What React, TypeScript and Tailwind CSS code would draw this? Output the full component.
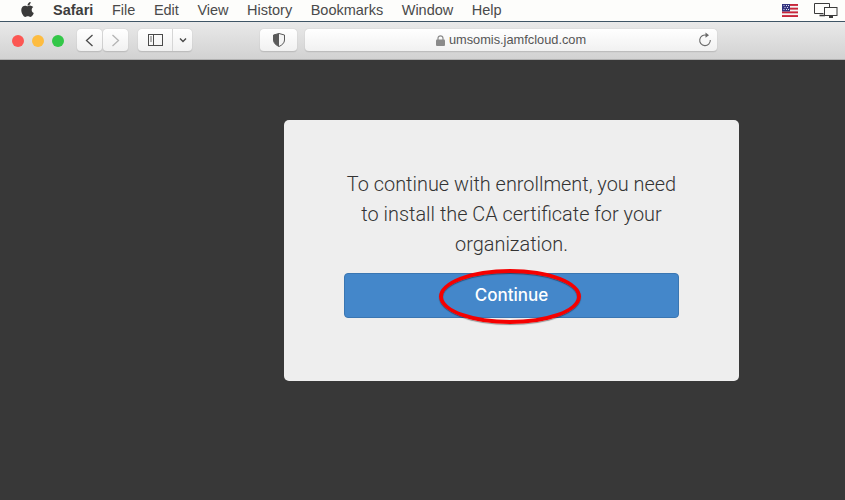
import React from 'react';
import { FaApple } from 'react-icons/fa';

const menuItems = ['File', 'Edit', 'View', 'History', 'Bookmarks', 'Window', 'Help'];

const toolButton = 'flex items-center justify-center h-[23px] rounded-[4px] border-b border-b-[#bdbdbd] bg-gradient-to-b from-[#ffffff] to-[#f1f1f1] shadow-[0_0_1px_rgba(0,0,0,0.25)]';

const UsFlag = () => (
  <svg width="16" height="13" viewBox="0 0 16 13" className="block">
    <rect width="16" height="13" fill="#f4f4f4" />
    <rect y="0" width="16" height="1.9" fill="#c8263a" />
    <rect y="3.7" width="16" height="1.9" fill="#c8263a" />
    <rect y="7.4" width="16" height="1.9" fill="#c8263a" />
    <rect y="11.1" width="16" height="1.9" fill="#c8263a" />
    <rect width="8" height="7.4" fill="#34347e" />
    <path d="M1.5 1.5h1M4 1.5h1M6 1.5h1M2.5 3.5h1M5 3.5h1M1.5 5.5h1M4 5.5h1M6 5.5h1" stroke="#dcdcf0" strokeWidth="1" />
  </svg>
);

const Displays = () => (
  <svg width="24" height="15" viewBox="0 0 24 15" fill="none" className="block">
    <path d="M9.5 10.5H.5V.5h15V4" stroke="#3a3a3a" />
    <path d="M5.5 12.5h5.5" stroke="#3a3a3a" strokeWidth="1.6" />
    <rect x="10.5" y="4.5" width="12.5" height="8" fill="#fdfdfb" stroke="#3a3a3a" />
    <path d="M15 14h4" stroke="#3a3a3a" strokeWidth="2" />
  </svg>
);

export default function App() {
  return (
    <div className="w-[845px] h-[500px] overflow-hidden flex flex-col bg-[#383838] font-['Inter',sans-serif]">
      <div className="h-[21px] bg-[#fdfdfb] flex items-center pl-[19px] pr-[7px] text-[14.5px] text-[#4a4a4a] font-['Liberation_Sans',sans-serif]">
        <FaApple className="text-[17px] text-[#3a3a3a] mb-[2px]" />
        <span className="ml-[17px] font-bold w-[41px] text-[#3d3d3d]">Safari</span>
        <div className="ml-[18px] flex gap-[18.5px]">
          {menuItems.map((item) => (
            <span key={item}>{item}</span>
          ))}
        </div>
        <div className="ml-auto flex items-center gap-[16px]">
          <UsFlag />
          <Displays />
        </div>
      </div>
      <div className="h-[1px] bg-[#3f5566]" />

      <div className="h-[38px] flex items-center pl-[12px] bg-gradient-to-b from-[#e9e9e9] to-[#d2d2d2] border-b border-b-[#b1b1b1]">
        <div className="flex gap-[8px]">
          <span className="w-[12px] h-[12px] rounded-full bg-[#fc5753]" />
          <span className="w-[12px] h-[12px] rounded-full bg-[#fdbc40]" />
          <span className="w-[12px] h-[12px] rounded-full bg-[#33c748]" />
        </div>
        <div className="ml-[13px] flex gap-[1px]">
          <div className={`${toolButton} w-[25px]`}>
            <svg width="9" height="13" viewBox="0 0 9 13" fill="none"><path d="M7.5 1 1.500 6.500l6 5.500" stroke="#4a4a4a" strokeWidth="1.3" /></svg>
          </div>
          <div className={`${toolButton} w-[25px]`}>
            <svg width="9" height="13" viewBox="0 0 9 13" fill="none"><path d="M1.500 1l6 5.500-6 5.500" stroke="#b4b4b4" strokeWidth="1.3" /></svg>
          </div>
        </div>
        <div className={`${toolButton} ml-[10px] w-[54px]`}>
          <div className="w-[35px] h-full flex items-center justify-center border-r border-r-[#d6d6d6]">
            <svg width="15" height="12" viewBox="0 0 15 12" fill="none">
              <rect x=".5" y=".5" width="14" height="11" stroke="#4a4a4a" />
              <path d="M5.500 0v12" stroke="#4a4a4a" />
              <path d="M2 3h2M2 5h2M2 7h2" stroke="#6a6a6a" />
            </svg>
          </div>
          <div className="flex-1 flex items-center justify-center">
            <svg width="8" height="6" viewBox="0 0 8 6" fill="none"><path d="M1 1.500 4 4.500l3-3" stroke="#4a4a4a" strokeWidth="1.4" /></svg>
          </div>
        </div>
        <div className={`${toolButton} ml-[68px] w-[37px]`}>
          <svg width="12" height="14" viewBox="0 0 12 14">
            <path d="M6 .5 11.500 2v5c0 3-2.500 5.200-5.500 6.500C3 12.200.5 10 .5 7V2z" fill="#f4f4f4" stroke="#5a5a5a" />
            <path d="M6 .5V13.500C3 12.200.5 10 .5 7V2z" fill="#5a5a5a" />
          </svg>
        </div>
        <div className={`${toolButton} ml-[8px] w-[412px] relative text-[12.8px] text-[#555555] font-['Liberation_Sans',sans-serif]`}>
          <svg width="9" height="11" viewBox="0 0 9 11" className="mr-[4px]">
            <rect y="4.500" width="9" height="6.500" rx="1" fill="#8a8a8a" />
            <path d="M2 5V3.300a2.500 2.500 0 0 1 5 0V5" fill="none" stroke="#8a8a8a" strokeWidth="1.200" />
          </svg>
          <span>umsomis.jamfcloud.com</span>
          <svg width="14" height="15" viewBox="0 0 14 15" fill="none" className="absolute right-[5px] top-[3px]">
            <path d="M8.500 3.200A5.300 5.300 0 1 0 12.300 8" stroke="#6a6a6a" strokeWidth="1.100" />
            <path d="M7.500.5 11 3.200 7.500 5.800z" fill="#6a6a6a" />
          </svg>
        </div>
      </div>

      <div className="flex-1 pt-[60px] pl-[284px]">
        <div className="w-[455px] h-[261px] rounded-[5px] bg-[#eeeeee] pt-[50px] px-[60px]">
          <p className="text-center text-[19.9px] leading-[30px] font-light text-[#333333] font-['Roboto',sans-serif]">
            To continue with enrollment, you need to install the CA certificate for your organization.
          </p>
          <div className="relative mt-[13px]">
            <button className="w-[335px] h-[45px] rounded-[4px] bg-[#4487ca] border border-[#3a76b2] text-white text-[17px] font-medium font-['Inter',sans-serif]">
              Continue
            </button>
            <div className="absolute left-[95px] top-[-4px] w-[142px] h-[55px] rounded-[50%] border-[4.5px] border-[#f50000] shadow-[0_1px_1px_rgba(0,0,0,0.4),inset_0_1px_1px_rgba(0,0,0,0.4)]" />
          </div>
        </div>
      </div>
    </div>
  );
}
